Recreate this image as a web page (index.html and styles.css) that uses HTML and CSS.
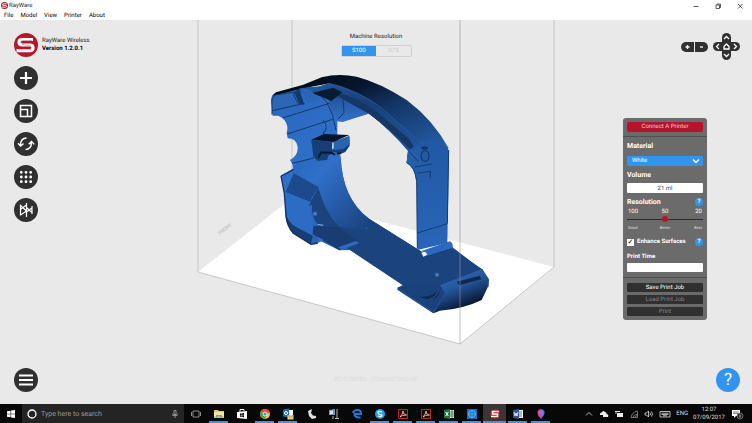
FILE: index.html
```html
<!DOCTYPE html>
<html lang="en">
<head>
<meta charset="utf-8">
<title>RayWare</title>
<link rel="stylesheet" href="styles.css">
</head>
<body>
<svg class="defs" aria-hidden="true">
  <symbol id="logo" viewBox="0 0 24 24">
    <circle cx="12" cy="12" r="12" fill="#b11a2b"/>
    <path d="M19 6.500H8.200Q5 6.500 5 9.200T8.200 12H15.800Q19 12 19 14.800T15.800 17.700H2.500" fill="none" stroke="#fff" stroke-width="3.200"/>
    <path d="M18 7.500H8.500Q6.500 7.500 7 9.500M17 16.800H4M8 11.500L17 13" fill="none" stroke="#b98a90" stroke-width=".7"/>
  </symbol>
</svg>

<header class="titlebar">
  <svg class="title-logo"><use href="#logo"/></svg>
  <span class="title">RayWare</span>
  <div class="window-buttons">
    <button aria-label="Minimize"><svg viewBox="0 0 8 8"><path d="M1.500 4.500h5"/></svg></button>
    <button aria-label="Restore"><svg viewBox="0 0 8 8"><path d="M2 3h3.500v3.500H2zM3 3V2h3.500v3.500h-1"/></svg></button>
    <button aria-label="Close"><svg viewBox="0 0 8 8"><path d="M2 2l4.500 4.500M6.500 2L2 6.500"/></svg></button>
  </div>
</header>
<nav class="menubar">
  <button>File</button><button>Model</button><button>View</button><button>Printer</button><button>About</button>
</nav>

<main class="workspace">
  <svg class="scene" viewBox="0 20 752 384" role="img" aria-label="Model on the build platform">
    <defs>
      <linearGradient id="arch" x1="0" y1="0" x2="1" y2="1">
        <stop offset="0" stop-color="#020509"/><stop offset=".3" stop-color="#07142a"/><stop offset=".55" stop-color="#14386c"/><stop offset="1" stop-color="#2864b2"/>
      </linearGradient>
      <linearGradient id="rim" x1="0" y1="0" x2="1" y2="1">
        <stop offset="0" stop-color="#255ca6"/><stop offset=".35" stop-color="#193f76"/><stop offset="1" stop-color="#2359a0"/>
      </linearGradient>
      <linearGradient id="ring" x1="0" y1="0" x2="1" y2="1">
        <stop offset="0" stop-color="#2866bd"/><stop offset=".3" stop-color="#3070c9"/><stop offset=".65" stop-color="#2558a3"/><stop offset="1" stop-color="#1b417c"/>
      </linearGradient>
      <linearGradient id="curl" x1="0" y1="0" x2=".5" y2="1">
        <stop offset="0" stop-color="#3475cc"/><stop offset=".5" stop-color="#24569b"/><stop offset=".85" stop-color="#0d2144"/><stop offset="1" stop-color="#02060d"/>
      </linearGradient>
      <linearGradient id="pocket" x1="0" y1="0" x2="0" y2="1">
        <stop offset="0" stop-color="#1f4e92"/><stop offset="1" stop-color="#3272ca"/>
      </linearGradient>
      <linearGradient id="leg" x1="0" y1="0" x2="0" y2="1">
        <stop offset="0" stop-color="#2058a4"/><stop offset="1" stop-color="#2966b9"/>
      </linearGradient>
    </defs>
    <polygon class="floor" points="198,272 292,198 554,267 460,344"/>
    <path class="cage" d="M292 20V198M198 20V272L460 344L554 267V20"/>
    <text class="floor-label" transform="translate(220 235) rotate(-38)">FRONT</text>
    <g transform="translate(250 70) scale(.33333)">
      <path fill="url(#ring)" d="M63 90Q64 72 78 68L160 48L240 60L262 118L262 190L272 262Q277 385 355 445L520 548L592 520L690 595L458 645L300 540L268 541L205 510L203 522L183 523L130 490Q112 470 108 440L103 370L93 318L128 297Q131 285 120 270Q145 255 143 230Q138 205 113 205L110 188Q118 165 98 145L85 137L68 137Z"/>
      <path fill="#1b447f" d="M205 355Q225 420 270 468L355 478Q310 430 290 375Q310 415 355 445L520 548L608 538L700 600L584 690L530 705L443 655L458 645L300 540L250 505L192 492L205 465Q183 440 185 405L174 408Z"/>
      <path fill="url(#ring)" d="M152 270L272 262Q277 385 355 445L345 480L268 470Q222 425 207 355L132 316L130 290Z"/>
      <path fill="#1d4a8a" d="M131 310L207 352L184 385L183 397L107 366Z"/>
      <path fill="#2d6cc5" d="M107 368L183 396L174 410L186 405Q180 440 193 470L190 490L183 523L130 490Q112 470 108 440Z"/>
      <path fill="#193c73" d="M108 430Q112 455 137 470L188 497L183 523L130 490Q112 470 108 440ZM190 468L265 472L330 516L268 541L188 492Z"/>
      <path fill="#2e6bc0" d="M265 532L318 513L329 519L275 540ZM203 500L222 510L203 519Z"/>
      <path d="M93 318L103 370Q105 395 108 440Q112 470 130 490L183 523L203 519M93 318L131 298" fill="none" stroke="#113366" stroke-width="4"/>
      <circle cx="195" cy="431" r="6" fill="#477fc5"/><path d="M203 463L220 466" stroke="#72a0dc" stroke-width="4"/>
      <path fill="url(#pocket)" d="M236 78L284 66L356 131L278 156L261 154L240 117Z"/>
      <path d="M279 85L282 128L264 148" stroke="#16396f" stroke-width="3" fill="none"/>
      <path fill="url(#arch)" d="M68 77L78 67L160 44L215 22Q265 9 320 20Q390 38 470 90Q550 150 596 235L548 258L490 235Q440 190 355 130L275 80L240 40L160 55Z"/>
      <path fill="url(#rim)" d="M238 39Q300 52 360 89L512 215L540 245L520 285L470 278L474 243Q420 180 356 130L278 87L180 70L160 54L208 49Z"/>
      <path fill="#143765" d="M242 62Q320 79 380 125L475 205L494 234L482 239Q421 179 355 130L278 87Z"/>
      <path d="M248 45Q330 66 390 110L510 216" fill="none" stroke="#2257a0" stroke-width="3"/>
      <path fill="#081b35" d="M186 69L250 53L277 67L244 93L214 80Z"/>
      <path fill="#2b66b7" d="M65 92L82 75L132 67L147 91L160 101L82 122L67 133Z"/>
      <path d="M66 134V89Q72 72 85 74L132 66Q128 76 146 101M67 122L164 100M148 55L184 96M98 144L238 100M112 192L248 148M126 280L192 264M214 80L230 96L248 137L258 181" fill="none" stroke="#14376c" stroke-width="3"/>
      <path fill="#14376c" d="M132 66L148 58L163 104L148 101Z"/>
      <path fill="#2a66b8" d="M150 54L180 59L213 91L173 98Z"/>
      <path fill="#f3f5f8" d="M222 159Q235 172 222 187Q229 170 222 159Z"/>
      <path d="M220 151Q237 174 219 191" stroke="#174383" stroke-width="4" fill="none"/>
      <path fill="#09152b" d="M184 209L222 192L298 195L250 216Z"/>
      <path fill="#163f78" d="M184 210L249 216L298 198L299 227L286 246L270 253L253 246L234 258L232 269L204 273L190 261Z"/>
      <path fill="#2863b2" d="M250 217L298 199L299 222L279 237L250 241Z"/>
      <path fill="#d9e6f7" d="M247 217L251 218V234L246 239Z"/>
      <path d="M205 264L213 247L243 248L255 254M261 252L273 248" stroke="#07162d" stroke-width="5" fill="none"/>
      <path fill="url(#leg)" d="M512 214L550 210Q585 218 597 242L592 519L502 540L500 335Q495 290 470 278L474 243Z"/>
      <path fill="#255da9" d="M474 243L509 237L540 260L547 280L541 324L520 332L499 330Q495 291 470 278Z"/>
      <path d="M470 278Q495 290 500 335L502 535M502 489L592 461M478 245L506 275M495 291L545 282M502 310L541 304L541 324M596 240L592 460" fill="none" stroke="#133b73" stroke-width="3"/>
      <ellipse cx="525" cy="258" rx="12" ry="16" fill="#2159a5" stroke="#143b72" stroke-width="4"/>
      <ellipse cx="524" cy="234" rx="10" ry="5" fill="#12366a"/>
      <path fill="#1b447f" d="M510 560L606 518L608 538L692 596L570 642L530 595Z"/>
      <path fill="#2c69bd" d="M514 543L600 514Q610 519 608 538L535 561L527 549Z"/>
      <path fill="#f7f9fc" d="M514 548L526 545L532 554L520 560Z"/>
      <path d="M532 560L608 536" stroke="#143a70" stroke-width="4"/>
      <circle cx="561" cy="614" r="6" fill="#4579b6"/>
      <path fill="#19417c" d="M443 652L470 646L568 640L596 670L550 730L443 660Z"/>
      <path fill="url(#curl)" d="M570 646L695 597L715 628L714 650L695 690Q640 717 570 722L550 730L584 669Z"/>
      <path fill="#0d2951" d="M621 635L690 617L693 628L627 646ZM508 680Q550 682 568 657Q571 683 541 690Z"/>
      <path d="M568 655Q560 684 535 689M443 656L550 727L585 672M695 598L715 628L714 650" fill="none" stroke="#234f8c" stroke-width="4"/>
    </g>
    <path class="cage front" d="M460 20V344"/>
  </svg>

  <aside class="tools">
    <div class="brand">
      <svg class="brand-logo"><use href="#logo"/></svg>
      <div><div class="brand-name">RayWare Wireless</div><div class="brand-version">Version 1.2.0.1</div></div>
    </div>
    <button class="round" aria-label="Add model"><svg viewBox="0 0 24 24"><path d="M12 6v12M6 12h12" stroke-width="2.200"/></svg></button>
    <button class="round" aria-label="Scale"><svg viewBox="0 0 24 24"><path d="M6.500 6.500h11v11h-11zM6.500 10.500h7v7M6.500 10.500v7" stroke-width="1.500"/></svg></button>
    <button class="round" aria-label="Rotate"><svg viewBox="0 0 24 24"><path d="M12.500 6Q6.500 6 6.500 13.500M4 11.200l2.500 2.800 3-2.400M11.500 17.500Q17.500 17.500 17.500 10M14.700 12.200l2.800-2.800 2.700 3" stroke-width="1.400"/></svg></button>
    <button class="round" aria-label="Layout"><svg viewBox="0 0 24 24"><path class="dots" d="M7.300 7.300h0M12 7.300h0M16.700 7.300h0M7.300 12h0M12 12h0M16.700 12h0M7.300 16.700h0M12 16.700h0M16.700 16.700h0"/></svg></button>
    <button class="round" aria-label="Mirror"><svg viewBox="0 0 24 24"><path d="M12.500 5v14M6.500 6.500v11M6.500 7.500l6 5.500-6 4M7 11l5.500-4M18 8v8M12.500 9.500l5.500 5M18 10l-5.500 4" stroke-width="1.200"/></svg></button>
    <button class="round last" aria-label="Menu"><svg viewBox="0 0 24 24"><path d="M5 7.500h14M5 12h14M5 16.500h14" stroke-width="1.800"/></svg></button>
  </aside>

  <section class="center">
    <div class="machine-label">Machine Resolution</div>
    <div class="segmented"><button class="on">S100</button><button disabled>D75</button></div>
    <div class="status">BC C 2BPED - CONNECTING.NE</div>
  </section>

  <aside class="side">
    <div class="view-controls">
      <div class="zoom"><button aria-label="Zoom in"><svg viewBox="0 0 13 10"><path d="M6.500 3v4M4.500 5h4"/></svg></button><button aria-label="Zoom out"><svg viewBox="0 0 13 10"><path d="M5 5h3"/></svg></button></div>
      <div class="pad">
        <button class="up" aria-label="Up"><svg viewBox="0 0 9 9"><path d="M2 6l2.500-2.500L7 6"/></svg></button>
        <button class="left" aria-label="Left"><svg viewBox="0 0 9 9"><path d="M6 2L3.500 4.500 6 7"/></svg></button>
        <button class="home" aria-label="Home"><svg viewBox="0 0 9 9"><path d="M2 4.500L4.500 2 7 4.500V7H2z"/></svg></button>
        <button class="right" aria-label="Right"><svg viewBox="0 0 9 9"><path d="M3 2l2.500 2.500L3 7"/></svg></button>
        <button class="down" aria-label="Down"><svg viewBox="0 0 9 9"><path d="M2 3l2.500 2.500L7 3"/></svg></button>
      </div>
    </div>

    <form class="panel">
      <button type="button" class="connect">Connect A Printer</button>
      <hr>
      <label class="heading" for="material">Material</label>
      <div class="select-wrap">
        <select id="material"><option>White</option></select>
        <svg viewBox="0 0 8 6"><path d="M1 1.500l3 3 3-3"/></svg>
      </div>
      <label class="heading" for="volume">Volume</label>
      <input class="field" id="volume" type="text" value="21 ml" readonly>
      <div class="row resolution"><label class="heading" for="resolution">Resolution</label><button type="button" class="hint" aria-label="Resolution help">?</button></div>
      <div class="ticks"><span>100</span><span>50</span><span>20</span></div>
      <input class="slider" id="resolution" type="range" min="0" max="2" value="1">
      <div class="ticks words"><span>Good</span><span>Better</span><span>Best</span></div>
      <div class="row enhance">
        <label><input type="checkbox" checked>Enhance Surfaces</label>
        <button type="button" class="hint" aria-label="Enhance surfaces help">?</button>
      </div>
      <label class="heading small" for="time">Print Time</label>
      <input class="field time" id="time" type="text" readonly>
      <hr>
      <div class="actions">
        <button type="button">Save Print Job</button>
        <button type="button" disabled>Load Print Job</button>
        <button type="button" disabled>Print</button>
      </div>
    </form>

    <button class="round help" aria-label="Help">?</button>
  </aside>
</main>

<footer class="taskbar">
  <button class="start" aria-label="Start"><svg viewBox="0 0 8 8"><path fill="#fff" d="M0 1.200L3.600.7v3H0zM4.100.6L8 0v3.700H4.100zM0 4.200h3.600v3L0 6.700zM4.100 4.200H8V8l-3.900-.6z"/></svg></button>
  <label class="search">
    <svg viewBox="0 0 10 10"><circle cx="5" cy="5" r="4" fill="none" stroke="#fff" stroke-width="1.300"/></svg>
    <input type="text" placeholder="Type here to search" aria-label="Search">
    <svg viewBox="0 0 10 10"><path fill="none" stroke="#aaa" stroke-width=".8" d="M4 1.500h2v4H4zM2.800 4.500v2h4.400v-2M5 6.500V9"/></svg>
  </label>
  <div class="apps">
    <button aria-label="Task view"><svg viewBox="0 0 12 12"><path fill="none" stroke="#aaa" stroke-width=".8" d="M3 3h6v6H3zM1.500 4v4M10.500 4v4"/></svg></button>
    <button class="open" aria-label="Explorer"><svg viewBox="0 0 12 12"><path fill="#eac35b" d="M1 2h4l1 1h5v7H1z"/><path fill="#f9e5a0" d="M1 4h10v4H1z"/><path fill="#55a9dc" d="M3 7h6v3H7.500V8.500h-3V10H3z"/></svg></button>
    <button aria-label="Store"><svg viewBox="0 0 12 12"><path fill="#fff" d="M1 4l10-1v8L1 10z"/><path fill="none" stroke="#fff" d="M4 4V1.500h4V3"/><path fill="#111" d="M4 5.500l1.700-.2v1.600H4zM6.200 5.200L8 5v1.900H6.200zM4 7.300h1.700V9L4 8.800zM6.200 7.300H8v2l-1.800-.2z"/></svg></button>
    <button class="open" aria-label="Chrome"><svg viewBox="0 0 12 12"><circle cx="6" cy="6" r="5" fill="#f2c52d"/><path fill="#df483b" d="M6 6L1.700 3.500A5 5 0 0 1 10.900 5z"/><path fill="#3d9f52" d="M6 6L1.700 3.500A5 5 0 0 0 5.700 11l2-4z"/><circle cx="6" cy="6" r="2" fill="#438cef" stroke="#fff" stroke-width=".8"/></svg></button>
    <button class="open" aria-label="Outlook"><svg viewBox="0 0 12 12"><path fill="#fff" d="M5 2h6v6H5z"/><path fill="#1769ba" d="M1 1.500L7 .5v9l-6-1z"/><circle cx="4" cy="5" r="1.500" fill="none" stroke="#fff"/><path fill="#edce7e" d="M5.500 7h6v4.500h-6z"/><path fill="none" stroke="#9d7930" stroke-width=".6" d="M5.500 7l3 2.500 3-2.500"/></svg></button>
    <button aria-label="Scanner"><svg viewBox="0 0 12 12"><path fill="#dce2e6" d="M7 1L3 3l1 5 3 3 4-1V8L8 7.500 6 5z"/></svg></button>
    <button aria-label="Archive"><svg viewBox="0 0 12 12"><path fill="#6a9bc7" d="M1 2l6-1v6H1z"/><path fill="#d6e4ed" d="M2 3l3-.5V6H2z"/><path fill="none" stroke="#b8b8b8" d="M9 1v9M7 10.500h4M5 8v3"/></svg></button>
    <button aria-label="Edge"><svg viewBox="0 0 12 12"><path fill="none" stroke="#1e78d5" stroke-width="2" d="M2 5Q3 2 6.500 2T10 6H4M3.500 5Q3 10 9.500 9.500"/></svg></button>
    <button class="open" aria-label="Skype"><svg viewBox="0 0 12 12"><circle cx="6" cy="6" r="5" fill="#16a7e8"/><path fill="none" stroke="#fff" stroke-width="1.300" d="M8 4Q4 2.500 4 4.500T8 7.200Q7.800 9.500 4 8"/></svg></button>
    <button class="open" aria-label="Acrobat"><svg viewBox="0 0 12 12"><path fill="#260709" stroke="#b92b2b" d="M1.500 1.500h9v9h-9z"/><path fill="none" stroke="#e5d5d5" stroke-width=".8" d="M3 9q3-3 3-6 0 4 3.500 4Q5 7 3 9"/></svg></button>
    <button class="open" aria-label="Acrobat"><svg viewBox="0 0 12 12"><path fill="#260709" stroke="#b92b2b" d="M1.500 1.500h9v9h-9z"/><path fill="none" stroke="#e5d5d5" stroke-width=".8" d="M3 9q3-3 3-6 0 4 3.500 4Q5 7 3 9"/></svg></button>
    <button class="open" aria-label="Excel"><svg viewBox="0 0 12 12"><path fill="#e9f3ec" d="M6 2h5v8H6z"/><path stroke="#217346" stroke-width=".8" d="M7 4h4M7 6h4M7 8h4M9 2v8"/><path fill="#217346" d="M1 2l6-1v10l-6-1z"/><path stroke="#fff" d="M2.700 4L5.300 8M5.300 4L2.700 8"/></svg></button>
    <button class="open" aria-label="Globe"><svg viewBox="0 0 12 12"><path fill="#1670ca" d="M1 1h10v10H1z"/><circle cx="6" cy="6" r="3.500" fill="none" stroke="#61b5f4"/><path fill="none" stroke="#61b5f4" stroke-width=".7" d="M2.500 6h7M6 2.500v7"/></svg></button>
    <button class="open active" aria-label="RayWare"><svg viewBox="0 0 12 12"><circle cx="6" cy="6" r="5" fill="#b4162b"/><path fill="none" stroke="#fff" stroke-width="1.600" d="M10 3.500H3.500V6h5v2.500H2"/></svg></button>
    <button class="open" aria-label="Word"><svg viewBox="0 0 12 12"><path fill="#e9f0f8" d="M6 2h5v8H6z"/><path stroke="#2b579a" stroke-width=".7" d="M7 4h3M7 6h3M7 8h3"/><path fill="#2b579a" d="M1 2l6-1v10l-6-1z"/><path fill="none" stroke="#fff" stroke-width=".8" d="M2 4l1 4 1-3 1 3 1-4"/></svg></button>
    <button class="open" aria-label="Paint"><svg viewBox="0 0 12 12"><path fill="#da4799" d="M6 11L3 7Q1 2 6 1z"/><path fill="#477fdb" d="M6 1q5 1 3 6l-3 4z"/><circle cx="6" cy="4.500" r="2" fill="#a270db"/></svg></button>
  </div>
  <div class="tray">
    <svg viewBox="0 0 10 10"><path d="M2 6.500l3-3 3 3"/></svg>
    <svg viewBox="0 0 10 10"><path class="solid" d="M1 5Q1 3 3 3.500 4 1 6 3q2 0 1.500 2Q10 5 9 8H4V6H1z"/></svg>
    <svg viewBox="0 0 10 10"><path class="solid" d="M3 4h6v4H3zM1 2h5v1H1z"/><path d="M2 2v3"/></svg>
    <svg class="dim" viewBox="0 0 10 10"><path d="M2 8.500Q3 3 8.500 2v6.500zM4 8.500Q4.500 5.500 8.500 5M6 8.500q0-1.500 2.500-2"/></svg>
    <svg viewBox="0 0 10 10"><path d="M1 4h1.500l2-2v6l-2-2H1zM6 3.500q1 1.500 0 3M7.500 2.500q2 2.500 0 5"/></svg>
    <svg class="keyboard" viewBox="0 0 12 10"><path d="M1 2.500h10v5.500H1zM2.500 4.200h7M2.500 5.500h7M4 6.800h4"/></svg>
    <span>ENG</span>
    <div class="clock"><div>12:07</div><div>07/09/2017</div></div>
    <svg class="notice" viewBox="0 0 14 12"><path fill="#fff" d="M2 2h8v6H6L4 10V8H2z"/><path stroke="#333" stroke-width=".6" d="M3 4h6M3 5.500h5"/><circle cx="10" cy="8" r="3" fill="#222" stroke="#888" stroke-width=".7"/><path stroke="#ddd" stroke-width=".8" d="M10 6.500v3"/></svg>
  </div>
</footer>
</body>
</html>
```
FILE: styles.css
```css
* { box-sizing: border-box; }
body {
  margin: 0;
  min-height: 100vh;
  display: flex;
  flex-direction: column;
  background: #e9e9e9;
  color: #222;
  font: 6px/8px Roboto, sans-serif;
  text-rendering: geometricPrecision;
}
button, input, select { margin: 0; padding: 0; border: 0; background: none; color: inherit; font: inherit; text-rendering: inherit; }
svg { display: block; }
.defs { position: absolute; width: 0; height: 0; }

.titlebar { display: flex; align-items: center; gap: 1px; height: 11px; padding-left: 1px; background: #fff; }
.title-logo { width: 7px; height: 7px; }
.window-buttons { display: flex; gap: 14px; margin-left: auto; padding-right: 8px; }
.window-buttons svg { width: 8px; height: 8px; fill: none; stroke: #333; stroke-width: .8; }
.menubar { display: flex; gap: 7px; height: 9px; padding-left: 4px; background: #fff; color: #000; }

.workspace { position: relative; flex: 1; display: grid; grid-template-columns: 1fr auto 1fr; }
.scene { position: absolute; inset: 0; width: 100%; height: 100%; }
.floor { fill: #fff; }
.cage { fill: none; stroke: #bcbcbc; stroke-width: .8; }
.cage.front { stroke: #8f949c; stroke-width: .6; }
.floor-label { fill: #b5b5b5; font-size: 5px; }
.tools, .center, .side { position: relative; display: flex; flex-direction: column; padding: 13px 12px 12px; }

.tools { gap: 9px; padding-left: 14px; align-items: flex-start; }
.brand { display: flex; align-items: center; gap: 4px; }
.brand-logo { width: 24px; height: 24px; }
.brand-version { color: #000; font-weight: 700; }
.round { width: 24px; height: 24px; border-radius: 50%; background: #303031; }
.round svg { width: 24px; height: 24px; fill: none; stroke: #fff; }
.round .dots { stroke-width: 2.8; stroke-linecap: round; }
.round.last { margin-top: auto; }

.center { align-items: center; gap: 4px; }
.machine-label { line-height: 8px; }
.segmented { display: grid; grid-template-columns: 1fr 1fr; width: 71px; height: 12px; border: 1px solid #d0d0d0; border-radius: 2px; color: #ccc; }
.segmented .on { background: #3194ef; color: #fff; }
.status { margin-top: auto; padding-bottom: 8px; color: #dcdcdc; }

.side { align-items: flex-end; }
.view-controls { display: flex; align-items: center; gap: 5px; }
.view-controls button { background: #303031; }
.view-controls svg { width: 100%; height: 100%; fill: none; stroke: #fff; stroke-width: 1.3; }
.zoom { display: flex; gap: 1px; }
.zoom button { width: 13px; height: 10px; border-radius: 5px 0 0 5px; }
.zoom button + button { border-radius: 0 5px 5px 0; }
.pad { display: grid; grid-template: "a up b" 9px "left home right" 9px "c down d" 9px / 9px 9px 9px; }
.up { grid-area: up; border-radius: 5px 5px 0 0; }
.left { grid-area: left; border-radius: 5px 0 0 5px; }
.home { grid-area: home; }
.right { grid-area: right; border-radius: 0 5px 5px 0; }
.down { grid-area: down; border-radius: 0 0 5px 5px; }

.panel { display: flex; flex-direction: column; width: 84px; margin: 58px 33px 0 0; padding: 4px; border-radius: 3px; background: #6b6b6b; color: #fff; }
.connect { height: 10px; border-radius: 2px; background: #b5152a; color: #f3c9ce; }
.panel hr { width: 84px; height: 1px; margin: 4px -4px; border: 0; background: #505050; }
.heading { height: 10px; font-weight: 700; font-size: 7px; line-height: 10px; }
.heading.small { font-size: 6px; }
.select-wrap { position: relative; margin: 5px 0 4px; }
.select-wrap select { display: block; width: 100%; height: 10px; padding-left: 5px; appearance: none; border-radius: 1px; background: #3194ef; }
.select-wrap svg { position: absolute; right: 3px; top: 2px; width: 8px; height: 6px; fill: none; stroke: #fff; stroke-width: 1.3; pointer-events: none; }
.field { width: 100%; height: 10px; margin-top: 3px; border-radius: 1px; background: #fff; color: #444; text-align: center; }
.field.time { margin: 1px 0; height: 9px; }
.row { display: flex; justify-content: space-between; align-items: center; }
.resolution { margin-top: 4px; }
.hint { width: 8px; height: 8px; border-radius: 50%; background: #3194ef; font-weight: 700; line-height: 8px; }
.ticks { display: grid; grid-template-columns: 1fr 1fr 1fr; height: 8px; margin-top: 1px; padding: 0 1px; text-align: center; }
.ticks :first-child { text-align: left; }
.ticks :last-child { text-align: right; }
.words { margin-top: 2px; color: #ddd; font-size: 4px; }
.slider { width: 100%; height: 6px; appearance: none; background: linear-gradient(#2b2b2b, #2b2b2b) center / 100% 1px no-repeat; }
.slider::-webkit-slider-thumb { width: 6px; height: 6px; appearance: none; border-radius: 50%; background: #b5152a; }
.enhance { height: 10px; margin: 5px 0 5px; font-weight: 700; }
.enhance label { display: flex; align-items: center; gap: 3px; }
.enhance input { width: 7px; height: 7px; appearance: none; background: #fff; }
.enhance input:checked::before { content: "✓"; display: block; color: #000; font: 700 7px/7px "DejaVu Sans", sans-serif; text-align: center; }
.actions { display: grid; gap: 3px; margin-top: 1px; }
.actions button { height: 9px; border-radius: 1px; background: #303031; }
.actions button:disabled { color: #858585; }
.help { margin-top: auto; background: #3194ef; color: #fff; font-size: 17px; line-height: 24px; }

.taskbar { display: flex; height: 19px; background: #080808; color: #ddd; }
.start { display: grid; place-items: center; width: 22px; }
.start svg { width: 8px; height: 8px; }
.search { display: flex; align-items: center; gap: 4px; width: 162px; padding: 0 4px 0 5px; background: #242424; }
.search svg { width: 10px; height: 10px; }
.search input { flex: 1; min-width: 0; font-size: 7px; }
.search input::placeholder { color: #999; opacity: 1; }
.apps { display: flex; }
.apps button { display: grid; place-items: center; width: 23px; }
.apps svg { width: 12px; height: 12px; }
.apps .open { background: linear-gradient(#4b91ce, #4b91ce) bottom / 19px 2px no-repeat; }
.apps .active { background-color: #3b3538; background-size: 100% 2px; }
.tray { display: flex; align-items: center; gap: 5px; margin-left: auto; padding-right: 8px; }
.tray svg { width: 10px; height: 10px; fill: none; stroke: #ddd; stroke-width: .8; }
.tray .solid { fill: #eee; stroke: none; }
.tray .dim { stroke: #888; }
.tray .keyboard { width: 12px; }
.tray .notice { width: 14px; height: 12px; stroke: none; }
.clock { text-align: center; }
```
